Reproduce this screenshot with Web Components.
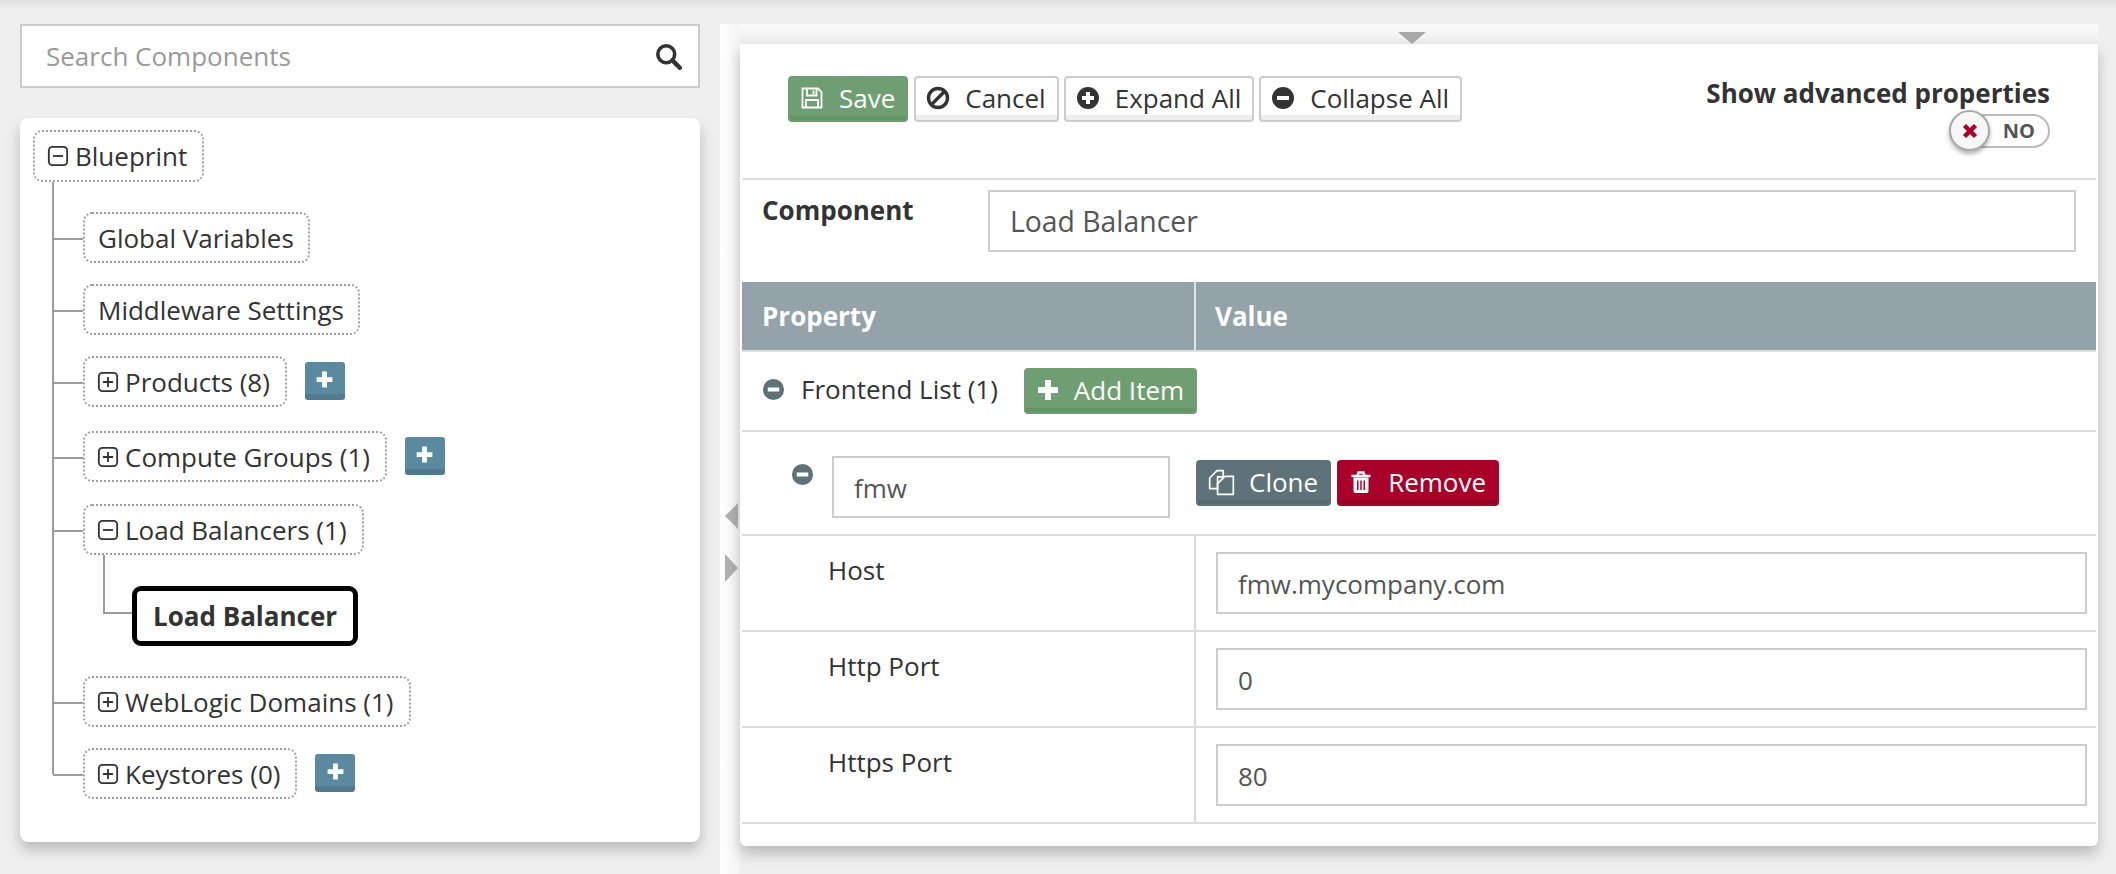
<!DOCTYPE html>
<html lang="en">

<head>
  <meta charset="UTF-8">
  <title>Blueprint Editor</title>
  <style>
    html, body { margin: 0; height: 100%; }
    body {
      overflow: hidden;
      background: linear-gradient(#dedede, #efefef 10px) no-repeat #efefef;
      font: 26px/32px "Open Sans", "Liberation Sans", sans-serif;
      color: #333;
    }
  </style>
</head>

<body>
  <editor-shell>
    <div slot="left">
      <search-box placeholder="Search Components"></search-box>
      <tree-panel>
        <tree-node label="Blueprint" toggle="minus" root>
          <tree-node label="Global Variables" style="margin-top:30px"></tree-node>
          <tree-node label="Middleware Settings" style="margin-top:21px"></tree-node>
          <tree-node label="Products (8)" toggle="plus" add style="margin-top:21px"></tree-node>
          <tree-node label="Compute Groups (1)" toggle="plus" add style="margin-top:24px"></tree-node>
          <tree-node label="Load Balancers (1)" toggle="minus" style="margin-top:22px">
            <tree-node label="Load Balancer" selected style="margin-top:31px"></tree-node>
          </tree-node>
          <tree-node label="WebLogic Domains (1)" toggle="plus" style="margin-top:30px"></tree-node>
          <tree-node label="Keystores (0)" toggle="plus" add style="margin-top:21px"></tree-node>
        </tree-node>
      </tree-panel>
    </div>
    <form-panel slot="right">
      <form-toolbar>
        <action-button variant="green" icon="save">Save</action-button>
        <action-button icon="ban">Cancel</action-button>
        <action-button icon="plusCircle">Expand All</action-button>
        <action-button icon="minusCircle">Collapse All</action-button>
      </form-toolbar>
      <component-row value="Load Balancer"></component-row>
      <table-head></table-head>
      <list-header label="Frontend List (1)"></list-header>
      <list-item value="fmw"></list-item>
      <prop-row label="Host" value="fmw.mycompany.com"></prop-row>
      <prop-row label="Http Port" value="0"></prop-row>
      <prop-row label="Https Port" value="80"></prop-row>
    </form-panel>
  </editor-shell>

  <script>
    const ICONS = {
      search: '<circle cx="10" cy="10" r="7.5" fill="none" stroke="currentColor" stroke-width="3.2"/><path d="M15.5 15.5L22 22" stroke="currentColor" stroke-width="4" stroke-linecap="round"/>',
      plusSquare: '<rect x="2" y="2" width="20" height="20" rx="4" fill="none" stroke="currentColor" stroke-width="2"/><path d="M12 6.5v11M6.5 12h11" stroke="currentColor" stroke-width="2"/>',
      minusSquare: '<rect x="2" y="2" width="20" height="20" rx="4" fill="none" stroke="currentColor" stroke-width="2"/><path d="M6.5 12h11" stroke="currentColor" stroke-width="2"/>',
      plus: '<path d="M12 2v20M2 12h20" stroke="currentColor" stroke-width="6"/>',
      save: '<path d="M2.5 2.500H18L21.500 6V21.500H2.500z" fill="none" stroke="currentColor" stroke-width="1.800"/><path d="M7 3v6.500H16.500V3M13.500 4.500v3.500" fill="none" stroke="currentColor" stroke-width="1.800"/><path d="M6 21V14H18V21" fill="none" stroke="currentColor" stroke-width="1.800"/>',
      ban: '<circle cx="12" cy="12" r="9.500" fill="none" stroke="currentColor" stroke-width="3.400"/><path d="M6 18L18 6" stroke="currentColor" stroke-width="3.400"/>',
      plusCircle: '<path fill-rule="evenodd" fill="currentColor" d="M12 1a11 11 0 1 0 0 22a11 11 0 1 0 0-22zM10 6h4v4h4v4h-4v4h-4v-4H6v-4h4z"/>',
      minusCircle: '<path fill-rule="evenodd" fill="currentColor" d="M12 1a11 11 0 1 0 0 22a11 11 0 1 0 0-22zM6 10h12v4H6z"/>',
      clone: '<path d="M8 1.500H13.500V7H8.500V17.500H1.500V8z" fill="none" stroke="currentColor" stroke-width="1.500" stroke-linejoin="round"/><path d="M15 6.500H22.500V22.500H8.500V13z" fill="none" stroke="currentColor" stroke-width="1.500" stroke-linejoin="round"/>',
      trash: '<path d="M2.500 6H21.500M8.500 5.500L9.500 2.500H14.500L15.500 5.500" fill="none" stroke="currentColor" stroke-width="2.400"/><path fill-rule="evenodd" fill="currentColor" d="M4.500 7.500H19.500V21a2 2 0 0 1-2 2H6.500a2 2 0 0 1-2-2zM8 10.500V20H9.500V10.500zM11.250 10.500V20H12.750V10.500zM14.500 10.500V20H16V10.500z"/>'
    }

    const icon = (name, size) =>
      `<svg width="${size}" height="${size}" viewBox="0 0 24 24" aria-hidden="true">${ICONS[name]}</svg>`

    class EditorShell extends HTMLElement {
      constructor() {
        super()
        this.attachShadow({ mode: 'open' }).innerHTML = `
          <style>
            :host { display: grid; grid-template-columns: 720px 20px 1358px; height: 874px; }
            .left { padding: 24px 20px 0; }
            .split {
              margin-top: 24px; padding-top: 479px;
              background: linear-gradient(to right, #fff, #f3f3f3);
              display: flex; flex-direction: column; gap: 25px; align-items: flex-end;
            }
            .split i { width: 0; height: 0; margin-right: 2px; border-style: solid; }
            .tl { border-width: 13px 13px 13px 0; border-color: transparent #b0b0b0 transparent transparent; }
            .tr { border-width: 14px 0 14px 13px; border-color: transparent transparent transparent #b0b0b0; }
            .right { padding-top: 24px; }
            .strip {
              height: 20px; display: flex; justify-content: center;
              padding: 8px 0 0 0; box-sizing: border-box;
              background: linear-gradient(#fbfbfb, #ececec);
            }
            .strip i {
              width: 0; height: 0; margin-right: 14px;
              border-style: solid; border-width: 12px 14px 0; border-color: #a8a8a8 transparent transparent;
            }
          </style>
          <div class="left"><slot name="left"></slot></div>
          <div class="split"><i class="tl"></i><i class="tr"></i></div>
          <div class="right">
            <div class="strip"><i></i></div>
            <slot name="right"></slot>
          </div>`
      }
    }

    class SearchBox extends HTMLElement {
      constructor() {
        super()
        this.attachShadow({ mode: 'open' }).innerHTML = `
          <style>
            :host {
              display: flex; align-items: center; justify-content: space-between;
              height: 64px; box-sizing: border-box; padding: 0 16px 0 24px;
              background: #fff; border: 2px solid #ccc; color: #999;
            }
            svg { color: #333; display: block; }
          </style>
          <span>${this.getAttribute('placeholder')}</span>
          ${icon('search', 27)}`
      }
    }

    class TreePanel extends HTMLElement {
      constructor() {
        super()
        this.attachShadow({ mode: 'open' }).innerHTML = `
          <style>
            :host {
              display: block; margin-top: 30px; height: 724px; box-sizing: border-box;
              padding: 12px 13px; background: #fff; border-radius: 8px;
              box-shadow: 0 8px 14px rgba(0, 0, 0, .22);
            }
          </style>
          <slot></slot>`
      }
    }

    class TreeNode extends HTMLElement {
      constructor() {
        super()
        const toggle = this.getAttribute('toggle')
        const selected = this.hasAttribute('selected')
        this.attachShadow({ mode: 'open' }).innerHTML = `
          <style>
            :host { display: block; position: relative; margin-top: 20px; }
            :host([root]) { margin-top: 0; }
            .row { display: flex; align-items: center; gap: 18px; }
            .box {
              display: flex; align-items: center; gap: 6px; height: 51px; box-sizing: border-box;
              padding: 0 14px 0 13px; border: 2px dotted #a0a0a0; border-radius: 9px; white-space: nowrap;
            }
            :host([toggle]) .box { padding-right: 15px; }
            :host([root]) .box { height: 52px; }
            .box.sel { height: 60px; padding: 0 16px; border: 5px solid #000; font-weight: 700; }
            .box svg { display: block; flex: none; margin-left: -1px; }
            .add {
              display: flex; align-items: center; justify-content: center;
              width: 40px; height: 38px; margin-top: -1px; border-radius: 3px; color: #fff;
              background: linear-gradient(#5b899f 85%, #4f7a90 85%);
            }
            .add svg { display: block; margin-top: -3px; }
            .kids { display: block; margin-left: 50px; }
            /* connector lines of the tree */
            :host(:not([root])) .row::before {
              content: ""; position: absolute; left: -30px; top: 26px; width: 30px; border-top: 2px solid #9c9c9c;
            }
            :host([selected]) .row::before { left: -29px; width: 29px; }
            .trunk { position: absolute; left: 20px; top: 51px; border-left: 2px solid #9c9c9c; }
            :host([root]) .trunk { left: 19px; top: 52px; height: 592px; }
          </style>
          <div class="row">
            <div class="box ${selected ? 'sel' : ''}">
              ${toggle ? icon(toggle === 'plus' ? 'plusSquare' : 'minusSquare', 22) : ''}<span>${this.getAttribute('label')}</span>
            </div>
            ${this.hasAttribute('add') ? `<div class="add">${icon('plus', 19)}</div>` : ''}
          </div>
          <div class="trunk"></div>
          <div class="kids"><slot></slot></div>`
      }

      connectedCallback() {
        // only nodes with children get a trunk line
        const kids = Array.from(this.children).filter((c) => c.localName === 'tree-node')
        const trunk = this.shadowRoot.querySelector('.trunk')
        if (!kids.length) {
          trunk.style.display = 'none'
        } else if (!this.hasAttribute('root')) {
          this.shadowRoot.querySelector('.kids').style.marginLeft = '49px'
          trunk.style.height = '59px'
        }
      }
    }

    class ActionButton extends HTMLElement {
      constructor() {
        super()
        const name = this.getAttribute('icon')
        this.attachShadow({ mode: 'open' }).innerHTML = `
          <style>
            :host {
              display: inline-flex; align-items: center; gap: 15px; height: 46px; box-sizing: border-box;
              padding: 0 11px 2px 10px; border: 2px solid #ccc; border-radius: 4px; white-space: nowrap;
              background: linear-gradient(#fff 88%, #eee 88%); color: #333;
            }
            :host([variant="green"]) { background: linear-gradient(#6f9e72 90%, #649366 90%); border-color: #6f9e72; color: #fff; }
            :host([variant="slate"]) { background: linear-gradient(#5f7279 90%, #556970 90%); border-color: #5f7279; color: #fff; }
            :host([variant="red"]) { background: linear-gradient(#a90029 90%, #980024 90%); border-color: #a90029; color: #fff; }
            svg { display: block; flex: none; }
          </style>
          ${name ? icon(name, name === 'clone' ? 27 : 24) : ''}<slot></slot>`
      }
    }

    class FormPanel extends HTMLElement {
      constructor() {
        super()
        this.attachShadow({ mode: 'open' }).innerHTML = `
          <style>
            :host {
              display: block; height: 802px; box-sizing: border-box; padding: 0 2px;
              background: #fff; border-radius: 0 0 6px 6px;
              box-shadow: 0 8px 14px rgba(0, 0, 0, .22);
            }
          </style>
          <slot></slot>`
      }
    }

    class FormToolbar extends HTMLElement {
      constructor() {
        super()
        this.attachShadow({ mode: 'open' }).innerHTML = `
          <style>
            :host {
              display: flex; justify-content: space-between; height: 136px; box-sizing: border-box;
              padding: 32px 46px 0; border-bottom: 2px solid #ddd;
            }
            .btns { display: flex; gap: 6px; height: 46px; }
            ::slotted(action-button:nth-child(n+3)) { margin-left: -1px; }
            .adv { display: flex; flex-direction: column; align-items: flex-end; margin-top: 1px; font-weight: 700; }
            advanced-toggle { margin-top: 5px; }
          </style>
          <div class="btns"><slot></slot></div>
          <div class="adv"><span>Show advanced properties</span><advanced-toggle></advanced-toggle></div>`
      }
    }

    class AdvancedToggle extends HTMLElement {
      constructor() {
        super()
        this.attachShadow({ mode: 'open' }).innerHTML = `
          <style>
            :host {
              display: flex; align-items: center; justify-content: flex-end; position: relative;
              width: 101px; height: 34px; box-sizing: border-box; padding-right: 13px;
              border: 2px solid #bbb; border-radius: 17px; background: #fff;
              font: 700 20px/30px "Open Sans", "Liberation Sans", sans-serif; color: #555;
            }
            .knob {
              position: absolute; left: -2px; top: -6px; width: 41px; height: 41px; box-sizing: border-box;
              display: flex; align-items: center; justify-content: center;
              border: 2px solid #aaa; border-radius: 50%; background: #f7f7f7;
              box-shadow: 0 3px 4px rgba(0, 0, 0, .3); color: #a90029;
            }
          </style>
          <span class="knob"><svg width="16" height="16" viewBox="0 0 16 16" aria-hidden="true"><path d="M2.500 2.500L13.500 13.500M13.500 2.500L2.500 13.500" stroke="currentColor" stroke-width="4.500"/></svg></span>
          <span>NO</span>`
      }
    }

    class ValueBox extends HTMLElement {
      constructor() {
        super()
        this.attachShadow({ mode: 'open' }).innerHTML = `
          <style>
            :host {
              display: flex; align-items: center; height: 62px; box-sizing: border-box; padding: 2px 20px 0;
              border: 2px solid #ccc; background: #fff; color: #555;
            }
          </style>
          <slot></slot>`
      }
    }

    class ComponentRow extends HTMLElement {
      constructor() {
        super()
        this.attachShadow({ mode: 'open' }).innerHTML = `
          <style>
            :host {
              display: grid; grid-template-columns: 226px 1088px; height: 102px; box-sizing: border-box;
              padding: 10px 0 0 20px;
            }
            b { margin-top: 4px; }
            value-box { font-size: 28.350px; padding-top: 0; }
          </style>
          <b>Component</b>
          <value-box>${this.getAttribute('value')}</value-box>`
      }
    }

    class TableHead extends HTMLElement {
      constructor() {
        super()
        this.attachShadow({ mode: 'open' }).innerHTML = `
          <style>
            :host {
              display: grid; grid-template-columns: 452px 1fr; height: 70px; box-sizing: border-box;
              background: #94a3aa; color: #fff; font-weight: 700; border-bottom: 2px solid #ddd;
            }
            div { display: flex; align-items: center; padding-left: 20px; }
            div + div { border-left: 2px solid #dfe4e6; padding-left: 19px; }
          </style>
          <div>Property</div><div>Value</div>`
      }
    }

    class ListHeader extends HTMLElement {
      constructor() {
        super()
        this.attachShadow({ mode: 'open' }).innerHTML = `
          <style>
            :host {
              display: flex; align-items: center; height: 80px; box-sizing: border-box;
              padding: 0 0 4px 20px; border-bottom: 2px solid #ddd;
            }
            svg { display: block; color: #5f7279; margin-right: 16px; }
            span { margin-right: 26px; }
            action-button { margin-top: 4px; }
          </style>
          ${icon('minusCircle', 23)}<span>${this.getAttribute('label')}</span>
          <action-button variant="green" icon="plus" style="gap:14px">Add Item</action-button>`
      }
    }

    class ListItem extends HTMLElement {
      constructor() {
        super()
        this.attachShadow({ mode: 'open' }).innerHTML = `
          <style>
            :host {
              display: flex; align-items: flex-start; height: 104px; box-sizing: border-box;
              padding: 24px 0 0 49px; border-bottom: 2px solid #ddd;
            }
            svg.toggle { display: block; color: #5f7279; margin: 7px 18px 0 0; flex: none; }
            value-box { width: 338px; margin-right: 26px; }
            .acts { display: flex; gap: 6px; margin-top: 4px; }
          </style>
          ${icon('minusCircle', 23).replace('<svg', '<svg class="toggle"')}
          <value-box>${this.getAttribute('value')}</value-box>
          <div class="acts">
            <action-button variant="slate" icon="clone" style="gap:14px">Clone</action-button>
            <action-button variant="red" icon="trash">Remove</action-button>
          </div>`
      }
    }

    class PropRow extends HTMLElement {
      constructor() {
        super()
        this.attachShadow({ mode: 'open' }).innerHTML = `
          <style>
            :host {
              display: grid; grid-template-columns: 452px 1fr; height: 96px; box-sizing: border-box;
              border-bottom: 2px solid #ddd;
            }
            .label { padding: 18px 0 0 86px; }
            .cell { border-left: 2px solid #ddd; padding: 16px 9px 0 20px; }
          </style>
          <div class="label">${this.getAttribute('label')}</div>
          <div class="cell"><value-box>${this.getAttribute('value')}</value-box></div>`
      }
    }

    window.customElements.define('value-box', ValueBox)
    window.customElements.define('advanced-toggle', AdvancedToggle)
    window.customElements.define('action-button', ActionButton)
    window.customElements.define('search-box', SearchBox)
    window.customElements.define('tree-panel', TreePanel)
    window.customElements.define('tree-node', TreeNode)
    window.customElements.define('form-panel', FormPanel)
    window.customElements.define('form-toolbar', FormToolbar)
    window.customElements.define('component-row', ComponentRow)
    window.customElements.define('table-head', TableHead)
    window.customElements.define('list-header', ListHeader)
    window.customElements.define('list-item', ListItem)
    window.customElements.define('prop-row', PropRow)
    window.customElements.define('editor-shell', EditorShell)
  </script>
</body>

</html>
